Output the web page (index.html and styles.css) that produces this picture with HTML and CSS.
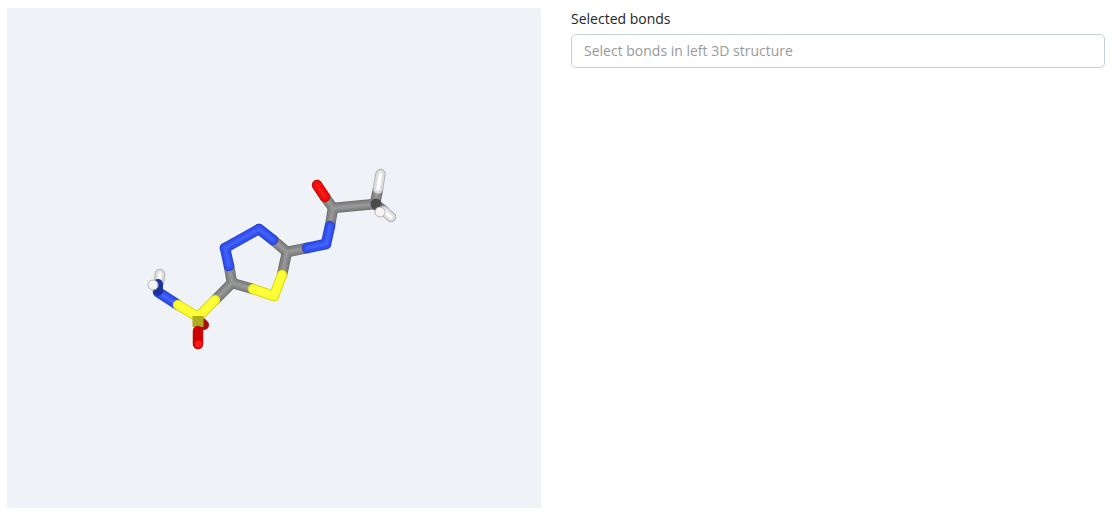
FILE: index.html
```html
<!DOCTYPE html>
<html>
<head lang="en">
    <meta charset="UTF-8">
    <title>Selected bonds</title>
    <link rel="stylesheet" href="styles.css">
</head>
<body>
<div class="page">
    <div class="viewer">
        <svg class="mol" width="534" height="500" viewBox="7 8 534 500">
            <defs>
                <filter id="soft"><feGaussianBlur stdDeviation="0.5"/></filter>
                <!-- half bonds, one group per element -->
                <g id="h-bonds">
                    <line x1="160" y1="274" x2="159" y2="282"/>
                    <line x1="380.500" y1="174" x2="378" y2="189"/>
                    <line x1="391" y1="217" x2="384" y2="211"/>
                </g>
                <g id="c-bonds">
                    <line x1="378" y1="189" x2="375" y2="204"/>
                    <line x1="384" y1="211" x2="375" y2="204"/>
                    <line x1="375" y1="204" x2="333" y2="208"/>
                    <line x1="333" y1="208" x2="325" y2="197"/>
                    <line x1="333" y1="208" x2="330" y2="226"/>
                    <line x1="287" y1="252" x2="307" y2="248"/>
                    <line x1="287" y1="252" x2="273" y2="240"/>
                    <line x1="287" y1="252" x2="282" y2="275"/>
                    <line x1="232" y1="283" x2="229" y2="266"/>
                    <line x1="232" y1="283" x2="253" y2="289"/>
                    <line x1="232" y1="283" x2="215" y2="300"/>
                </g>
                <g id="n-bonds">
                    <line x1="158" y1="292" x2="178" y2="305"/>
                    <line x1="229" y1="266" x2="225" y2="248"/>
                    <line x1="225" y1="248" x2="259" y2="229"/>
                    <line x1="259" y1="229" x2="273" y2="240"/>
                    <line x1="307" y1="248" x2="326" y2="244"/>
                    <line x1="326" y1="244" x2="330" y2="226"/>
                </g>
                <g id="s-bonds">
                    <line x1="178" y1="305" x2="198" y2="317"/>
                    <line x1="215" y1="300" x2="198" y2="317"/>
                    <line x1="253" y1="289" x2="274" y2="296"/>
                    <line x1="274" y1="296" x2="282" y2="275"/>
                </g>
                <g id="o-bonds">
                    <line x1="325" y1="197" x2="317" y2="185"/>
                </g>
            </defs>

            <g filter="url(#soft)">
                <!-- second oxygen, behind the sulfur -->
                <line class="bond back-o" x1="200" y1="321" x2="204" y2="325"/>

                <use href="#c-bonds" class="bond c edge"/>
                <use href="#c-bonds" class="bond c body"/>
                <use href="#c-bonds" class="bond c shine"/>
                <use href="#n-bonds" class="bond n edge"/>
                <use href="#n-bonds" class="bond n body"/>
                <use href="#n-bonds" class="bond n shine"/>
                <use href="#s-bonds" class="bond s edge"/>
                <use href="#s-bonds" class="bond s body"/>
                <use href="#s-bonds" class="bond s shine"/>
                <use href="#o-bonds" class="bond o edge"/>
                <use href="#o-bonds" class="bond o body"/>
                <use href="#o-bonds" class="bond o shine"/>
                <use href="#h-bonds" class="bond h edge"/>
                <use href="#h-bonds" class="bond h body"/>
                <use href="#h-bonds" class="bond h shine"/>

                <!-- amine nitrogen seen nearly end on -->
                <line class="bond amine" x1="158" y1="284" x2="158" y2="291"/>
                <!-- methyl carbon front cap -->
                <circle class="cap" cx="376" cy="204" r="5.500"/>

                <!-- front hydrogens -->
                <circle class="ball" cx="380" cy="212" r="5"/>
                <circle class="ball" cx="153" cy="285" r="5"/>

                <!-- sulfonyl, pointing at the viewer -->
                <line class="bond s-dark" x1="198" y1="316" x2="198" y2="327"/>
                <line class="bond o-dark" x1="198" y1="331" x2="198" y2="344"/>
                <circle class="tip" cx="198.500" cy="344" r="3.500"/>
            </g>
        </svg>
    </div>
    <div class="side">
        <label class="label" for="bonds">Selected bonds</label>
        <input class="field" id="bonds" type="text" placeholder="Select bonds in left 3D structure">
    </div>
</div>
</body>
</html>
```

FILE: styles.css
```css
* {
    margin: 0;
    padding: 0;
    box-sizing: border-box;
}

body {
    font-family: "Open Sans", "Noto Sans", sans-serif;
    font-size: 14px;
    color: #212529;
    background-color: #fff;
}

.page {
    display: grid;
    grid-template-columns: 534px 534px;
    column-gap: 30px;
    padding: 8px 7px;
}

.viewer {
    height: 500px;
    background-color: #eff3f8;
}

.mol {
    display: block;
}

.side {
    display: flex;
    flex-direction: column;
}

.label {
    height: 26px;
    line-height: 21px;
}

.field {
    width: 100%;
    height: 34px;
    padding: 0 12px 2px;
    border: 1px solid #c5cedb;
    border-radius: 5px;
    font-family: inherit;
    font-size: 14px;
    outline: none;
}

.field::placeholder {
    color: #999;
    opacity: 1;
}

/* molecule */
.bond {
    fill: none;
    stroke-linecap: round;
}

.edge {
    stroke-width: 10.500;
}

.body {
    stroke-width: 8.500;
}

.shine {
    stroke-width: 3.500;
}

.c.edge { stroke: #6c6c6c; }
.c.body { stroke: #858585; }
.c.shine { stroke: #969696; }

.n.edge { stroke: #2a42c8; }
.n.body { stroke: #3050f0; }
.n.shine { stroke: #4060f8; }

.s.edge { stroke: #d8d824; }
.s.body { stroke: #fcfc2c; }
.s.shine { stroke: #ffff40; }

.o.edge { stroke: #c00808; }
.o.body { stroke: #ec0808; }
.o.shine { stroke: #ff1414; }

.h.edge { stroke: #b4b4b4; }
.h.body { stroke: #dedede; }
.h.shine { stroke: #fff; }

.back-o {
    stroke: #a80808;
    stroke-width: 10;
}

.amine {
    stroke: #1f339f;
    stroke-width: 10;
}

.cap {
    fill: #4c4c4c;
}

.ball {
    fill: #f4f4f4;
    stroke: #b4b4b4;
    stroke-width: 1;
}

.s-dark {
    stroke: #aead1c;
    stroke-width: 11;
    stroke-linecap: butt;
}

.o-dark {
    stroke: #cc0606;
    stroke-width: 10.500;
}

.tip {
    fill: #ff1414;
}
```
